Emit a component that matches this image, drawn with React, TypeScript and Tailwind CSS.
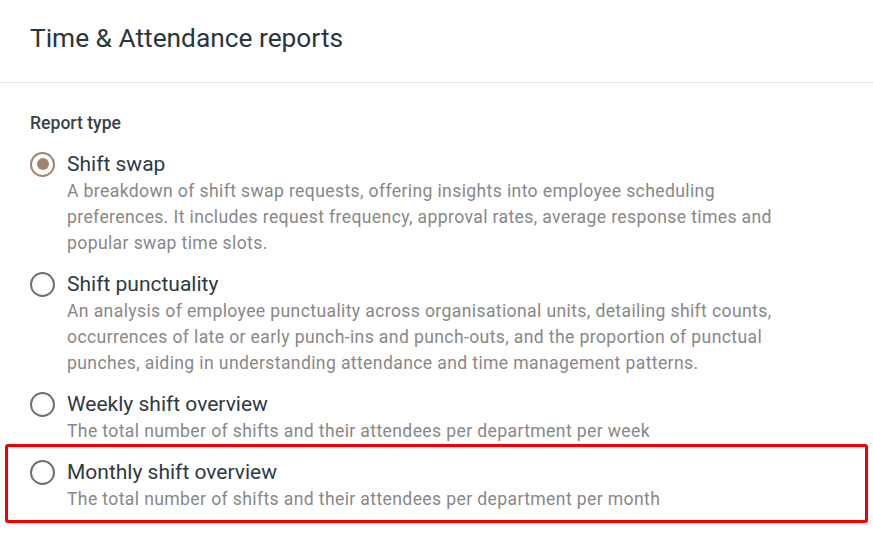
const reportTypes = [
  {
    id: "shift-swap",
    label: "Shift swap",
    description:
      "A breakdown of shift swap requests, offering insights into employee scheduling preferences. It includes request frequency, approval rates, average response times and popular swap time slots.",
  },
  {
    id: "shift-punctuality",
    label: "Shift punctuality",
    description:
      "An analysis of employee punctuality across organisational units, detailing shift counts, occurrences of late or early punch-ins and punch-outs, and the proportion of punctual punches, aiding in understanding attendance and time management patterns.",
  },
  {
    id: "weekly-shift-overview",
    label: "Weekly shift overview",
    description: "The total number of shifts and their attendees per department per week",
  },
  {
    id: "monthly-shift-overview",
    label: "Monthly shift overview",
    description: "The total number of shifts and their attendees per department per month",
  },
];

function Radio({ checked }: { checked: boolean }) {
  return (
    <span className="flex h-7 w-[26px] shrink-0 items-center">
      <span
        className={
          checked
            ? "flex h-[25px] w-[25px] items-center justify-center rounded-full border-2 border-[#a4826e]"
            : "flex h-[25px] w-[25px] items-center justify-center rounded-full border-2 border-[#6f6f6f]"
        }
      >
        {checked && <span className="h-3 w-3 rounded-full bg-[#a4826e]" />}
      </span>
    </span>
  );
}

export default function App() {
  const selected = "shift-swap";
  const highlighted = "monthly-shift-overview";

  return (
    <div className="min-h-screen bg-white font-['Roboto',sans-serif]">
      <header className="border-b border-[#e6e6e6] px-[30px] pt-[21px] pb-[27px]">
        <h1 className="text-[26.3px] leading-[34px] text-[#2a363e]">Time &amp; Attendance reports</h1>
      </header>

      <section className="px-[30px] pt-[27px]">
        <p className="text-[17.6px] font-medium leading-[26px] text-[#37434b]">Report type</p>

        <div className="mt-[14px] flex flex-col gap-[14px]">
          {reportTypes.map((r) => (
            <label key={r.id} className="relative flex cursor-pointer gap-[11px]">
              <Radio checked={r.id === selected} />
              <div className="max-w-[715px]">
                <div className="text-[21px] leading-7 text-[#2e3a42]">{r.label}</div>
                <div className="text-[17.6px] leading-[26px] tracking-[0.37px] text-[#888888]">
                  {r.description}
                </div>
              </div>
              {r.id === highlighted && (
                <span className="pointer-events-none absolute -top-[14px] -right-[25px] -bottom-[11px] -left-[25px] rounded-[3px] border-[3px] border-[#f00000]" />
              )}
            </label>
          ))}
        </div>
      </section>
    </div>
  );
}
